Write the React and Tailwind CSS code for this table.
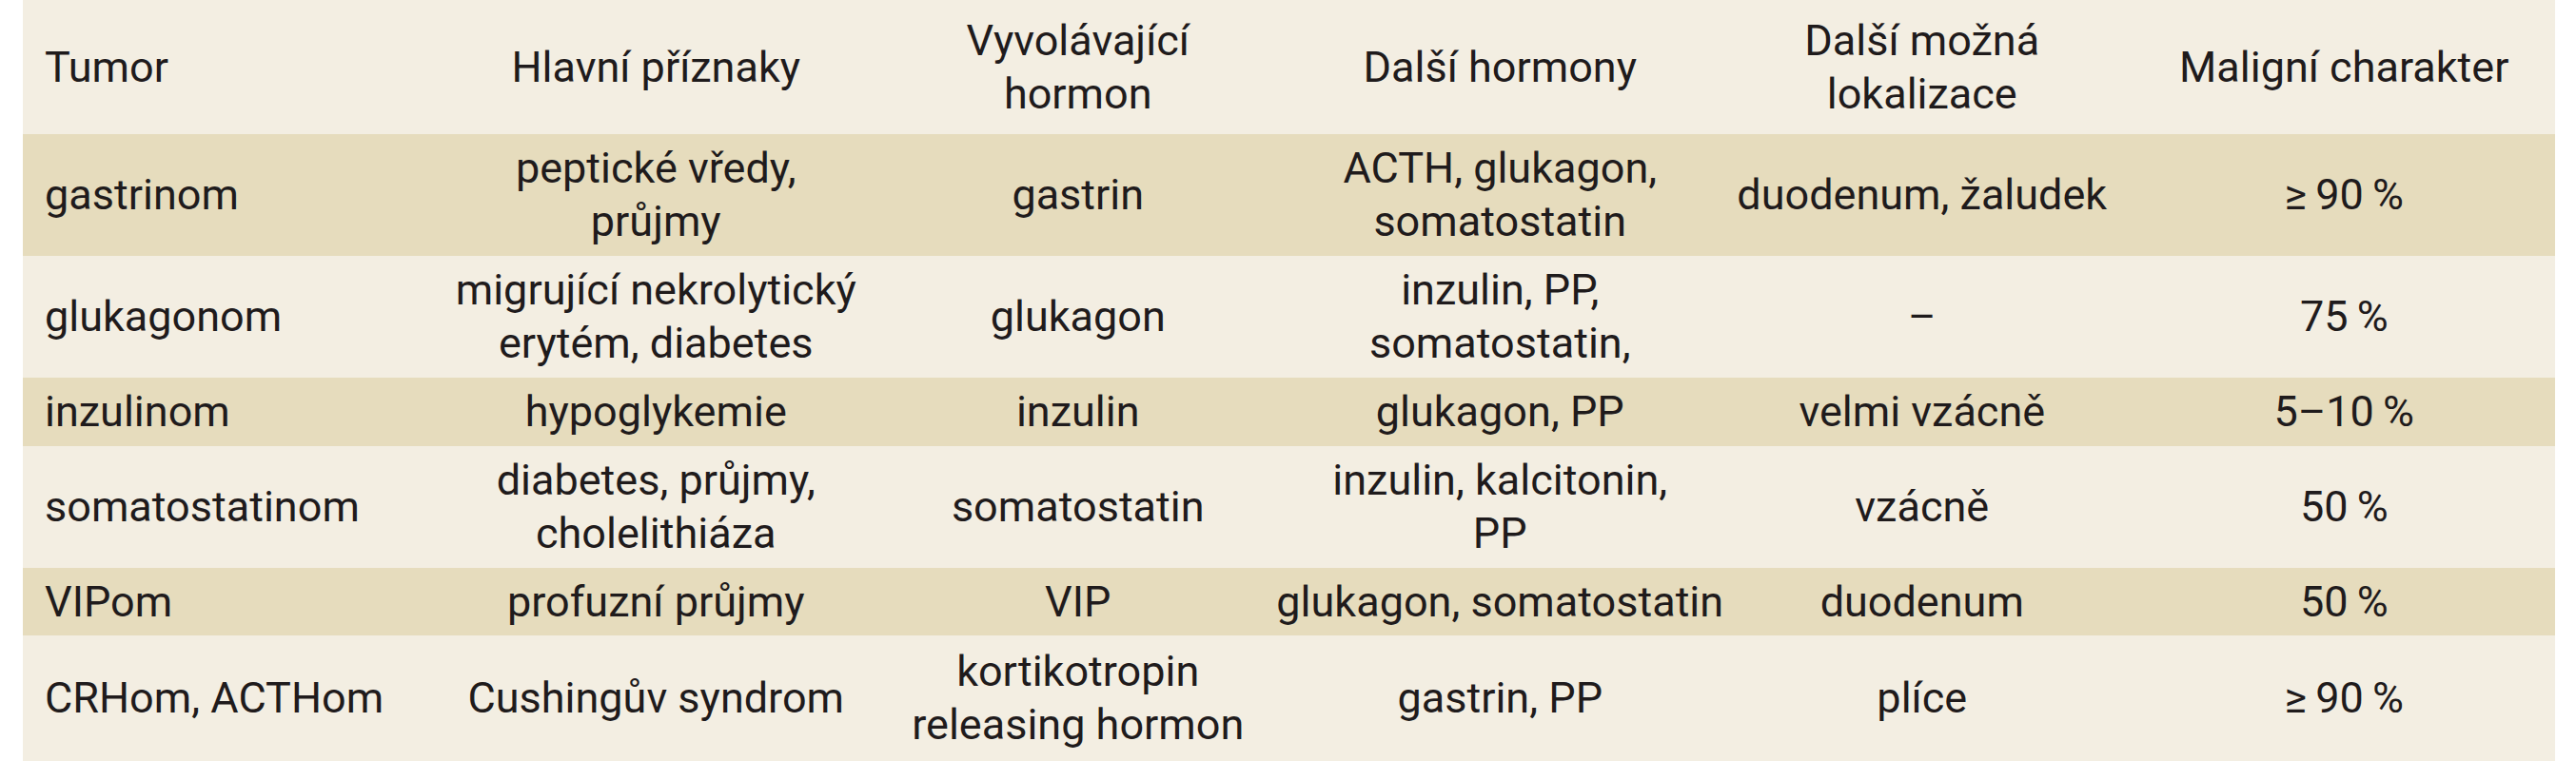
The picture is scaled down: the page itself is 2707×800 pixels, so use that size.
import React from "react";

const LIGHT = "bg-[#f3eee2]";
const DARK = "bg-[#e6dcbd]";

const rows = [
  {
    h: "h-[128px]",
    bg: DARK,
    cells: [
      ["gastrinom"],
      ["peptické vředy,", "průjmy"],
      ["gastrin"],
      ["ACTH, glukagon,", "somatostatin"],
      ["duodenum, žaludek"],
      ["≥\u200990\u2009%"],
    ],
  },
  {
    h: "h-[128px]",
    bg: LIGHT,
    cells: [
      ["glukagonom"],
      ["migrující nekrolytický", "erytém, diabetes"],
      ["glukagon"],
      ["inzulin, PP,", "somatostatin,"],
      ["–"],
      ["75\u2009%"],
    ],
  },
  {
    h: "h-[72px]",
    bg: DARK,
    cells: [
      ["inzulinom"],
      ["hypoglykemie"],
      ["inzulin"],
      ["glukagon, PP"],
      ["velmi vzácně"],
      ["5–10\u2009%"],
    ],
  },
  {
    h: "h-[128px]",
    bg: LIGHT,
    cells: [
      ["somatostatinom"],
      ["diabetes, průjmy,", "cholelithiáza"],
      ["somatostatin"],
      ["inzulin, kalcitonin,", "PP"],
      ["vzácně"],
      ["50\u2009%"],
    ],
  },
  {
    h: "h-[71px]",
    bg: DARK,
    cells: [
      ["VIPom"],
      ["profuzní průjmy"],
      ["VIP"],
      ["glukagon, somatostatin"],
      ["duodenum"],
      ["50\u2009%"],
    ],
  },
  {
    h: "h-[132px]",
    bg: LIGHT,
    cells: [
      ["CRHom, ACTHom"],
      ["Cushingův syndrom"],
      ["kortikotropin", "releasing hormon"],
      ["gastrin, PP"],
      ["plíce"],
      ["≥\u200990\u2009%"],
    ],
  },
];

const header = [
  ["Tumor"],
  ["Hlavní příznaky"],
  ["Vyvolávající", "hormon"],
  ["Další hormony"],
  ["Další možná", "lokalizace"],
  ["Maligní charakter"],
];

function Cell({ lines, first }) {
  return (
    <div
      className={
        first
          ? "flex items-center justify-start pl-[23px]"
          : "flex flex-col items-center justify-center text-center"
      }
    >
      <div className={first ? "text-left" : "text-center"}>
        {lines.map((l, i) => (
          <div key={i} className="whitespace-nowrap">
            {l}
          </div>
        ))}
      </div>
    </div>
  );
}

export default function App() {
  return (
    <div className="w-[2707px] h-[800px] bg-white overflow-hidden">
      <div
        className="ml-[24px] w-[2661px] text-[45px] leading-[56px] text-[#1f1b1c]"
        style={{ fontFamily: "Roboto, 'Noto Sans', sans-serif" }}
      >
        <div className={`grid grid-cols-6 h-[141px] ${LIGHT}`}>
          {header.map((c, i) => (
            <Cell key={i} lines={c} first={i === 0} />
          ))}
        </div>
        {rows.map((r, ri) => (
          <div key={ri} className={`grid grid-cols-6 ${r.h} ${r.bg}`}>
            {r.cells.map((c, i) => (
              <Cell key={i} lines={c} first={i === 0} />
            ))}
          </div>
        ))}
      </div>
    </div>
  );
}
